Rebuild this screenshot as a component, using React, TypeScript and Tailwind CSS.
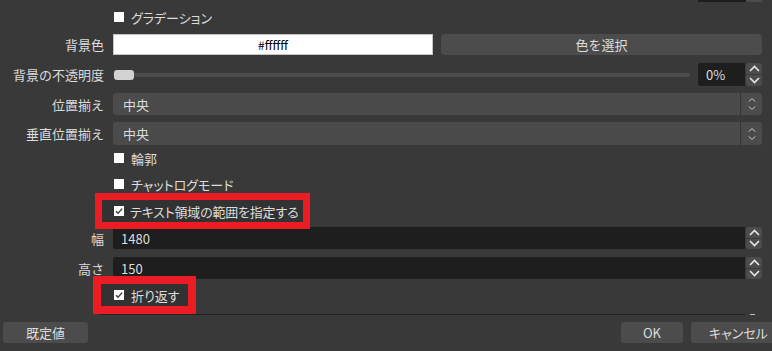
const labelCls = 'w-[104px] shrink-0 text-right'

function Label({ children }: { children: string }) {
  return <div className={labelCls}>{children}</div>
}

function Check({ checked }: { checked?: boolean }) {
  return (
    <svg width="10" height="10" viewBox="0 0 10 10" className="shrink-0">
      <rect width="10" height="10" fill="#ffffff" />
      {checked && <path d="M2 5.2 L4 7.2 L8.2 2.6" fill="none" stroke="#3a3939" strokeWidth="1.4" />}
    </svg>
  )
}

function Chevron({ up, thin }: { up?: boolean; thin?: boolean }) {
  return thin ? (
    <svg width="8" height="5" viewBox="0 0 8 5">
      <path d={up ? 'M1 4.5 L4 1.5 L7 4.5' : 'M1 0.5 L4 3.5 L7 0.5'} fill="none" stroke="#cfcfcf" strokeWidth="1" />
    </svg>
  ) : (
    <svg width="11" height="7" viewBox="0 0 11 7">
      <path d={up ? 'M1 6 L5.5 1.5 L10 6' : 'M1 1 L5.5 5.5 L10 1'} fill="none" stroke="#e6e6e6" strokeWidth="1.6" />
    </svg>
  )
}

function SpinButtons() {
  return (
    <div className="ml-px flex h-full w-[16px] shrink-0 flex-col gap-px">
      <div className="flex flex-1 items-center justify-center rounded-t-[3px] bg-[#4c4c4c]">
        <Chevron up />
      </div>
      <div className="flex flex-1 items-center justify-center rounded-b-[3px] bg-[#4c4c4c]">
        <Chevron />
      </div>
    </div>
  )
}

function Combo({ value }: { value: string }) {
  return (
    <div className="flex h-full flex-1 items-center rounded-[3px] bg-[#4b4b4b]">
      <span className="flex-1 pl-[10px]">{value}</span>
      <div className="flex h-full w-[22px] flex-col items-center justify-center gap-[4px] border-l border-[#353535]">
        <Chevron up thin />
        <Chevron thin />
      </div>
    </div>
  )
}

function SpinInput({ value }: { value: string }) {
  return (
    <div className="flex h-full flex-1">
      <div className="flex flex-1 items-center rounded-l-[2px] bg-[#1f1e1f] pl-[8px]">{value}</div>
      <SpinButtons />
    </div>
  )
}

function CheckRow({ label, checked, mt }: { label: string; checked?: boolean; mt: string }) {
  return (
    <div className={`flex h-[22px] items-center pl-[114px] ${mt}`}>
      <Check checked={checked} />
      <span className="ml-[7px] [font-feature-settings:'palt']">{label}</span>
    </div>
  )
}

export default function App() {
  return (
    <div className="flex h-[351px] w-[772px] flex-col overflow-hidden bg-[#3a3939] font-['Noto_Sans_CJK_JP',sans-serif] text-[13px] leading-none text-[#dcdcdc]">
      <div className="flex h-[314px] flex-col pr-[10px]">
        {/* tail of the row above */}
        <div className="flex h-[2px] justify-end">
          <div className="w-[48px] bg-[#1f1e1f]" />
          <div className="w-[16px] bg-[#4c4c4c]" />
        </div>

        <CheckRow label="グラデーション" mt="mt-[4px]" />

        <div className="mt-[6px] flex h-[21px] items-center">
          <Label>背景色</Label>
          <div className="ml-[9px] flex h-full w-[320px] items-center justify-center border border-[#c4c4c4] bg-white text-[12px] text-black">
            #ffffff
          </div>
          <button className="ml-[8px] h-full flex-1 rounded-[4px] bg-[#4c4c4c] text-[#dcdcdc]">色を選択</button>
        </div>

        <div className="mt-[8px] flex h-[23px] items-center">
          <Label>背景の不透明度</Label>
          <div className="relative ml-[9px] flex h-full w-[577px] items-center">
            <div className="h-[4px] w-full rounded-full bg-[#4c4c4c]" />
            <div className="absolute left-px h-[10px] w-[20px] rounded-[3px] bg-[#d2d2d2]" />
          </div>
          <div className="ml-[8px] flex h-full flex-1">
            <SpinInput value="0%" />
          </div>
        </div>

        <div className="mt-[7px] flex h-[22px] items-center">
          <Label>位置揃え</Label>
          <div className="ml-[9px] flex h-full flex-1">
            <Combo value="中央" />
          </div>
        </div>

        <div className="mt-[7px] flex h-[23px] items-center">
          <Label>垂直位置揃え</Label>
          <div className="ml-[9px] flex h-full flex-1">
            <Combo value="中央" />
          </div>
        </div>

        <CheckRow label="輪郭" mt="mt-[2px]" />
        <CheckRow label="チャットログモード" mt="mt-[4px]" />

        <div className="mt-[5px] flex h-[22px]">
          <div className="relative z-10 ml-[102px] flex items-center bg-[#323232] pl-[12px] pr-[5px] outline outline-[7px] outline-[#ec1c24]">
            <Check checked />
            <span className="ml-[6px] tracking-[-0.2px] [font-feature-settings:'palt']">テキスト領域の範囲を指定する</span>
          </div>
        </div>

        <div className="mt-[5px] flex h-[22px] items-center">
          <Label>幅</Label>
          <div className="ml-[9px] flex h-full flex-1">
            <SpinInput value="1480" />
          </div>
        </div>

        <div className="mt-[8px] flex h-[22px] items-center">
          <Label>高さ</Label>
          <div className="ml-[9px] flex h-full flex-1">
            <SpinInput value="150" />
          </div>
        </div>

        <div className="mt-[5px] flex h-[22px]">
          <div className="relative z-10 ml-[101px] flex items-center bg-[#323232] pl-[13px] pr-[8px] outline outline-[8px] outline-[#ec1c24]">
            <Check checked />
            <span className="ml-[7px] [font-feature-settings:'palt']">折り返す</span>
          </div>
        </div>
      </div>

      <div className="flex h-px">
        <div className="ml-[100px] w-[645px] bg-[#232323]" />
        <div className="ml-[5px] w-[5px] bg-[#bdbdbd]" />
      </div>

      <div className="mt-[7px] flex h-[21px] items-stretch">
        <button className="ml-[3px] w-[85px] rounded-[3px] bg-[#4c4c4c] text-[#dcdcdc]">既定値</button>
        <button className="ml-auto w-[62px] shrink-0 rounded-[3px] bg-[#4c4c4c] text-[#dcdcdc]">OK</button>
        <button className="-mr-[4px] ml-[8px] w-[85px] shrink-0 rounded-[3px] bg-[#4c4c4c] pl-[18px] text-left text-[#dcdcdc] [font-feature-settings:'palt']">
          キャンセル
        </button>
      </div>
    </div>
  )
}
